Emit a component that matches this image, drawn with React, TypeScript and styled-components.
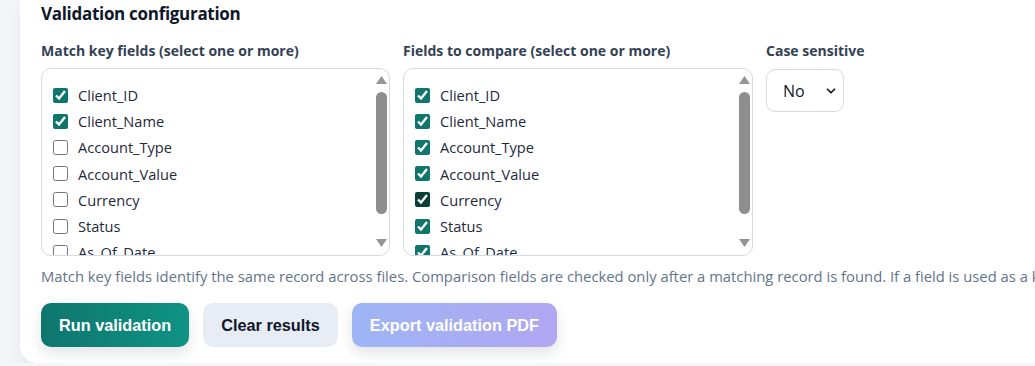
import React from "react";
import styled, { createGlobalStyle } from "styled-components";
import { ChevronDown } from "lucide-react";

const GlobalStyle = createGlobalStyle`
  body {
    margin: 0;
    background: #f3f5f9;
    overflow: hidden;
    font-family: "Open Sans", "Noto Sans", sans-serif;
  }
`;

const Page = styled.div`
  padding-left: 20px;
  width: 1200px;
`;

const Card = styled.section`
  background: #ffffff;
  border-radius: 0 0 0 18px;
  box-shadow: 0 6px 18px rgba(30, 41, 59, 0.06);
  padding: 2px 24px 16px 21px;
`;

const Title = styled.h3`
  margin: 0;
  font-size: 17px;
  letter-spacing: -0.3px;
  line-height: 24px;
  font-weight: 700;
  color: #0f172a;
`;

const Grid = styled.div`
  display: grid;
  grid-template-columns: 349px 350px auto;
  column-gap: 13px;
  margin-top: 15px;
`;

const Field = styled.div`
  display: flex;
  flex-direction: column;
  align-items: flex-start;
`;

const Label = styled.label`
  font-size: 14px;
  line-height: 20px;
  font-weight: 700;
  color: #334155;
  margin-bottom: 7px;
`;

const CheckList = styled.div`
  box-sizing: border-box;
  display: flex;
  width: 100%;
  height: 188px;
  overflow: hidden;
  border: 1px solid #d6dae8;
  border-radius: 10px;
`;

const Items = styled.div`
  flex: 1;
  overflow: hidden;
  padding: 13px 0 0 11px;
`;

const Rail = styled.div`
  width: 15px;
  display: flex;
  flex-direction: column;
  align-items: center;
  padding: 7px 0 8px;
  box-sizing: border-box;
`;

const Thumb = styled.div`
  width: 11px;
  height: 122px;
  margin-top: 8px;
  border-radius: 6px;
  background: #8e8e8e;
`;

const Spacer = styled.div`
  flex: 1;
`;

const Arrow = ({ down }: { down?: boolean }) => (
  <svg width="11" height="8" viewBox="0 0 11 8">
    <path d={down ? "M0 0 H11 L5.5 8 Z" : "M0 8 H11 L5.5 0 Z"} fill="#949494" />
  </svg>
);

const Option = styled.label`
  display: flex;
  align-items: center;
  gap: 10px;
  height: 26.2px;
  font-size: 14.6px;
  color: #1e293b;
`;

const Box = styled.input<{ $tone?: string }>`
  width: 15px;
  height: 15px;
  margin: 0;
  accent-color: ${(p) => p.$tone || "#0f766e"};
`;

const SelectWrap = styled.div`
  position: relative;
  margin-top: 1px;
`;

const Select = styled.select`
  appearance: none;
  width: 78px;
  height: 43px;
  border: 1px solid #d6dae8;
  border-radius: 9px;
  background: #ffffff;
  padding: 0 0 0 16px;
  font-family: "Open Sans", sans-serif;
  font-size: 16px;
  color: #111827;
`;

const Chevron = styled(ChevronDown)`
  position: absolute;
  right: 6px;
  top: 15px;
  pointer-events: none;
  color: #111827;
`;

const Help = styled.p`
  margin: 10px 0 0;
  font-size: 14.8px;
  line-height: 20px;
  color: #64748b;
  white-space: nowrap;
`;

const Actions = styled.div`
  display: flex;
  gap: 14px;
  margin-top: 17px;
`;

const Button = styled.button<{ $variant: "primary" | "soft" | "disabled" }>`
  height: 44px;
  padding: 0 18px;
  border: none;
  border-radius: 10px;
  font-family: "Liberation Sans", Arial, sans-serif;
  font-weight: 700;
  font-size: 16.3px;
  color: ${(p) => (p.$variant === "soft" ? "#0f172a" : "#ffffff")};
  background: ${(p) =>
    p.$variant === "primary"
      ? "linear-gradient(90deg, #0f766e, #0f9384)"
      : p.$variant === "soft"
      ? "#e8ecf5"
      : "linear-gradient(90deg, #9db5f4, #b1a6f1)"};
  box-shadow: ${(p) =>
    p.$variant === "soft" ? "none" : "0 6px 14px rgba(15, 23, 42, 0.12)"};
`;

const fields = [
  "Client_ID",
  "Client_Name",
  "Account_Type",
  "Account_Value",
  "Currency",
  "Status",
  "As_Of_Date",
];

const keyChecked = ["Client_ID", "Client_Name"];

const FieldList = ({ isChecked, toneFor }: { isChecked: (f: string) => boolean; toneFor?: (f: string) => string | undefined }) => (
  <CheckList>
    <Items>
      {fields.map((f) => (
        <Option key={f}>
          <Box type="checkbox" defaultChecked={isChecked(f)} $tone={toneFor?.(f)} />
          {f}
        </Option>
      ))}
    </Items>
    <Rail>
      <Arrow />
      <Thumb />
      <Spacer />
      <Arrow down />
    </Rail>
  </CheckList>
);

export default function App() {
  return (
    <Page>
      <GlobalStyle />
      <Card>
        <Title>Validation configuration</Title>
        <Grid>
          <Field>
            <Label>Match key fields (select one or more)</Label>
            <FieldList isChecked={(f) => keyChecked.includes(f)} />
          </Field>
          <Field>
            <Label>Fields to compare (select one or more)</Label>
            <FieldList
              isChecked={() => true}
              toneFor={(f) => (f === "Currency" ? "#0b3f39" : undefined)}
            />
          </Field>
          <Field>
            <Label>Case sensitive</Label>
            <SelectWrap>
              <Select defaultValue="no">
                <option value="no">No</option>
                <option value="yes">Yes</option>
              </Select>
              <Chevron size={14} strokeWidth={3} />
            </SelectWrap>
          </Field>
        </Grid>
        <Help>
          Match key fields identify the same record across files. Comparison fields are checked only after a
          matching record is found. If a field is used as a key and also selected for comparison, it is compared too.
        </Help>
        <Actions>
          <Button $variant="primary">Run validation</Button>
          <Button $variant="soft">Clear results</Button>
          <Button $variant="disabled">Export validation PDF</Button>
        </Actions>
      </Card>
    </Page>
  );
}
